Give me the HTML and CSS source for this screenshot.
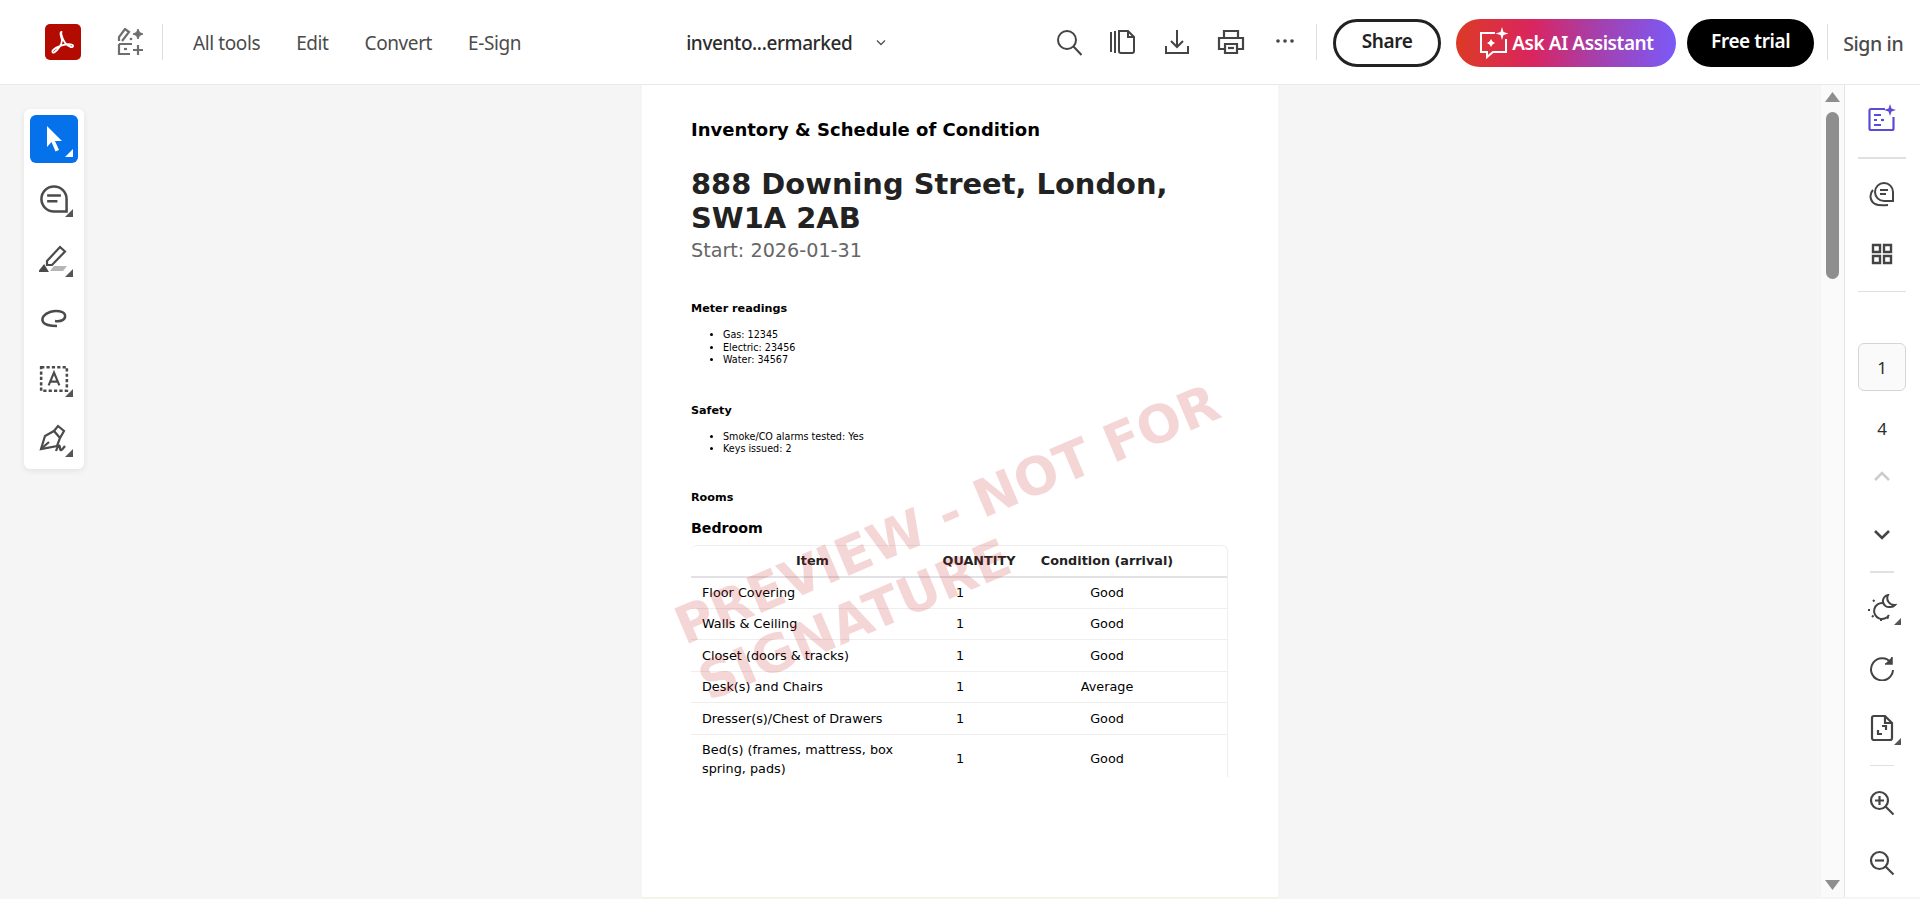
FILE: index.html
```html
<!DOCTYPE html>
<html lang="en">

<head>
    <meta charset="UTF-8">
    <title>inventory watermarked</title>
    <link rel="stylesheet" href="styles.css">
</head>

<body>
    <header class="topbar">
        <div class="logo">
            <svg width="36" height="36" viewBox="0 0 36 36"><path d="M16.600 8c-1.600 0-1.200 3 0 6.400 1.600 5-4 11.800-7.400 14-1.600 1-2.600-1-1-2.400 4-3.500 12.600-6.800 18.600-5.400 2 .5 1.600 2.900-1 2.400-4-.8-7.800-6-9.200-11.800-.7-3-.6-3.200 0-3.200z" fill="none" stroke="#fff" stroke-width="1.800" stroke-linejoin="round"/></svg>
        </div>
        <svg class="tools-icon" width="28" height="28" viewBox="0 0 28 28" fill="none" stroke="#6e6e6e" stroke-width="2.200"><path d="M2 13V9l6-8 4 3-7 9"/><path d="M2 16v10h11M2 16h13"/><path d="M16 22h10M21 17v10"/><path d="M21 1l1.500 3.500L26 6l-3.500 1.500L21 11l-1.500-3.500L16 6l3.500-1.500z" fill="#6e6e6e" stroke-width="1"/><circle cx="14" cy="11" r="1.300" fill="#6e6e6e" stroke="none"/><path d="M7 21h3"/></svg>
        <span class="vline vline-first"></span>
        <nav class="menu">
            <a>All tools</a>
            <a>Edit</a>
            <a>Convert</a>
            <a>E-Sign</a>
        </nav>
        <div class="filename">invento...ermarked</div>
        <svg class="file-chevron" width="12" height="8" viewBox="0 0 12 8" fill="none" stroke="#555" stroke-width="1.400"><path d="M2 1.500l4 4 4-4"/></svg>
        <div class="actions">
            <svg width="28" height="28" viewBox="0 0 28 28" fill="none" stroke="#444" stroke-width="2"><circle cx="12" cy="12" r="9"/><path d="M18.500 18.500l8 8.500"/></svg>
            <svg width="28" height="28" viewBox="0 0 28 28" fill="none" stroke="#444" stroke-width="2"><path d="M2 4v20M6 3v22"/><path d="M10 3h9l6 6v14a2 2 0 0 1-2 2H12a2 2 0 0 1-2-2z"/><path d="M19 3v6h6"/></svg>
            <svg width="28" height="28" viewBox="0 0 28 28" fill="none" stroke="#444" stroke-width="2"><path d="M14 2v17M8 13l6 6 6-6"/><path d="M3 18v7h22v-7"/></svg>
            <svg width="28" height="28" viewBox="0 0 28 28" fill="none" stroke="#444" stroke-width="2.200"><path d="M7 10V3h14v7"/><path d="M7 21H2V10h24v11h-5"/><path d="M8 16h12v9H8z"/><path d="M11 20h6"/></svg>
            <svg width="28" height="28" viewBox="0 0 28 28" fill="#444"><circle cx="7" cy="13" r="1.800"/><circle cx="14" cy="13" r="1.800"/><circle cx="21" cy="13" r="1.800"/></svg>
        </div>
        <span class="vline vline-actions"></span>
        <button class="btn btn-share">Share</button>
        <button class="btn btn-ai">
            <svg width="32" height="34" viewBox="0 0 32 34" fill="none" stroke="#fff" stroke-width="2"><path d="M17 7H3v19h6v5l6-5h13V13"/><path d="M24 1l1.500 5 5 1.500-5 1.500-1.500 5-1.500-5-5-1.500 5-1.500z" fill="#fff" stroke="none"/><path d="M13 13l1.500 2.500 2.500 1.500-2.500 1.500-1.500 2.500-1.500-2.500-2.500-1.500 2.500-1.500z" fill="#fff" stroke="none"/></svg>
            Ask AI Assistant
        </button>
        <button class="btn btn-trial">Free trial</button>
        <span class="vline vline-sign"></span>
        <a class="signin">Sign in</a>
    </header>

    <main class="viewer">
        <div class="side-left">
            <div class="toolbar">
                <div class="tool tool-active">
                    <svg width="24" height="28" viewBox="0 0 24 28" fill="#fff"><path d="M5 1l15 15h-7l4 9-3.500 1.500-4-9.500L5 22z"/></svg>
                    <span class="corner corner-white"></span>
                </div>
                <div class="tool">
                    <svg width="32" height="32" viewBox="0 0 28 28" fill="none" stroke="#4b4b4b" stroke-width="2.200"><path d="M14 3a11 11 0 1 0 0 22h11V14A11 11 0 0 0 14 3z"/><path d="M8 11h12M8 16h9"/></svg>
                    <span class="corner"></span>
                </div>
                <div class="tool">
                    <svg width="30" height="30" viewBox="0 0 30 30" fill="none" stroke="#4b4b4b" stroke-width="2.200"><path d="M8 17L21 3l5 4.500L13 21H8z"/><path d="M1 27l4-5 3 5z" fill="#4b4b4b"/><path d="M11 27l4-5h13l-4 5z" fill="#b5b5b5" stroke="none"/></svg>
                    <span class="corner"></span>
                </div>
                <div class="tool">
                    <svg width="28" height="24" viewBox="0 0 28 24" fill="none" stroke="#4b4b4b" stroke-width="2.400"><path d="M15 14c7 1 11-2 10-6-1-4-9-5-15-3C4 7 1 11 3 15c2 3 7 4 14 4"/></svg>
                </div>
                <div class="tool">
                    <svg width="30" height="30" viewBox="0 0 28 28" fill="none" stroke="#4b4b4b" stroke-width="2.400"><path d="M2 3h24v22H2z" stroke-dasharray="3 2"/><path d="M9 20l5-12 5 12M10.500 16.500h7" stroke-width="2"/></svg>
                    <span class="corner"></span>
                </div>
                <div class="tool">
                    <svg width="30" height="30" viewBox="0 0 30 30" fill="none" stroke="#4b4b4b" stroke-width="2.200"><path d="M2 25l4-13 9-5 6 7-3 8z"/><path d="M15 7l4-5 6 5-4 7"/><path d="M2 25l8-7"/><path d="M17 27c2-6 4-7 4-3s2 2 5-2"/></svg>
                    <span class="corner"></span>
                </div>
            </div>
        </div>

        <div class="page-col">
            <article class="page">
                <div class="doc-kicker">Inventory &amp; Schedule of Condition</div>
                <h1 class="doc-title">888 Downing Street, London, SW1A 2AB</h1>
                <div class="doc-start">Start: 2026-01-31</div>

                <h2 class="doc-section doc-meter">Meter readings</h2>
                <ul class="doc-list">
                    <li>Gas: 12345</li>
                    <li>Electric: 23456</li>
                    <li>Water: 34567</li>
                </ul>

                <h2 class="doc-section doc-safety">Safety</h2>
                <ul class="doc-list">
                    <li>Smoke/CO alarms tested: Yes</li>
                    <li>Keys issued: 2</li>
                </ul>

                <h2 class="doc-section doc-rooms">Rooms</h2>
                <h3 class="doc-room">Bedroom</h3>

                <div class="table-clip">
                    <table class="rooms">
                        <thead>
                            <tr><th class="col-item">Item</th><th class="col-qty">QUANTITY</th><th class="col-cond">Condition (arrival)</th><th></th></tr>
                        </thead>
                        <tbody>
                            <tr><td>Floor Covering</td><td>1</td><td>Good</td><td></td></tr>
                            <tr><td>Walls &amp; Ceiling</td><td>1</td><td>Good</td><td></td></tr>
                            <tr><td>Closet (doors &amp; tracks)</td><td>1</td><td>Good</td><td></td></tr>
                            <tr><td>Desk(s) and Chairs</td><td>1</td><td>Average</td><td></td></tr>
                            <tr><td>Dresser(s)/Chest of Drawers</td><td>1</td><td>Good</td><td></td></tr>
                            <tr><td>Bed(s) (frames, mattress, box spring, pads)</td><td>1</td><td>Good</td><td></td></tr>
                        </tbody>
                    </table>
                </div>

                <div class="watermark">PREVIEW - NOT FOR<br>SIGNATURE</div>
            </article>
        </div>

        <div class="side-right"></div>

        <div class="scroll-lane">
            <span class="arrow-up"></span>
            <span class="thumb"></span>
            <span class="arrow-down"></span>
        </div>

        <aside class="rail">
            <div class="rail-btn rail-ai">
                <svg width="28" height="28" viewBox="0 0 28 28" fill="none" stroke="#5c4bd6" stroke-width="2.200"><path d="M17 5H3a1.500 1.500 0 0 0-1.500 1.500v18A1.500 1.500 0 0 0 3 26h21a1.500 1.500 0 0 0 1.500-1.500V13"/><path d="M6 11h7M6 16h3M6 21h7"/><path d="M13 16h3"/><path d="M22 0l1.500 4.500L28 6l-4.500 1.500L22 12l-1.500-4.500L16 6l4.500-1.500z" fill="#5c4bd6" stroke="none"/></svg>
            </div>
            <div class="rail-sep rail-sep-thick"></div>
            <div class="rail-btn">
                <svg width="26" height="26" viewBox="0 0 26 26" fill="none" stroke="#444" stroke-width="2"><path d="M15 2a9 9 0 1 0 0 18h9v-9a9 9 0 0 0-9-9z"/><path d="M11 9h8M11 13h6"/><path d="M4 9a9 9 0 0 0 2 14c3 1.500 8 1.500 13 1"/></svg>
            </div>
            <div class="rail-btn">
                <svg width="22" height="22" viewBox="0 0 22 22" fill="none" stroke="#444" stroke-width="2.400"><path d="M2 2h7v7H2zM13 2h7v7h-7zM2 13h7v7H2zM13 13h7v7h-7z"/></svg>
            </div>
            <div class="rail-sep rail-sep-pages"></div>
            <div class="page-box">1</div>
            <div class="page-total">4</div>
            <div class="rail-btn rail-chev">
                <svg width="18" height="12" viewBox="0 0 18 12" fill="none" stroke="#ccc" stroke-width="2.600"><path d="M2 10l7-7 7 7"/></svg>
            </div>
            <div class="rail-btn rail-chev-down">
                <svg width="18" height="12" viewBox="0 0 18 12" fill="none" stroke="#444" stroke-width="2.600"><path d="M2 2l7 7 7-7"/></svg>
            </div>
            <div class="rail-sep rail-sep-short rail-sep-thick"></div>
            <div class="rail-btn">
                <svg width="30" height="28" viewBox="0 0 30 28" fill="none" stroke="#444" stroke-width="2"><path d="M16 9a8 8 0 1 0 6 12"/><path d="M21 1a6 6 0 0 0 2 12 6 6 0 0 0 5-2 7 7 0 0 1-7-10z"/><path d="M1 16h2M6 6l1.500 1.500M14 25v2M5 23l1.500-1.500M20 23l1.500 1.500"/></svg>
                <span class="corner corner-rail"></span>
            </div>
            <div class="rail-btn">
                <svg width="26" height="26" viewBox="0 0 26 26" fill="none" stroke="#444" stroke-width="2"><path d="M22 8a11 11 0 1 0 2 7"/><path d="M23 2v7h-7" fill="#444" stroke-width="1.500"/></svg>
            </div>
            <div class="rail-btn">
                <svg width="24" height="28" viewBox="0 0 24 28" fill="none" stroke="#444" stroke-width="2.200"><path d="M4 2h11l7 7v15a2 2 0 0 1-2 2H4a2 2 0 0 1-2-2V4a2 2 0 0 1 2-2z"/><path d="M15 2v7h7"/><path d="M12 12h4v4M12 20H8v-4"/></svg>
                <span class="corner corner-rail"></span>
            </div>
            <div class="rail-sep rail-sep-short rail-sep-zoom"></div>
            <div class="rail-btn">
                <svg width="26" height="26" viewBox="0 0 26 26" fill="none" stroke="#444" stroke-width="2.200"><circle cx="10.500" cy="10.500" r="8.500"/><path d="M16.500 16.500l8 8"/><path d="M6 10.500h9M10.500 6v9"/></svg>
            </div>
            <div class="rail-btn">
                <svg width="26" height="26" viewBox="0 0 26 26" fill="none" stroke="#444" stroke-width="2.200"><circle cx="10.500" cy="10.500" r="8.500"/><path d="M16.500 16.500l8 8"/><path d="M6 10.500h9"/></svg>
            </div>
        </aside>
    </main>
</body>

</html>
```

FILE: styles.css
```css
* {
    box-sizing: border-box;
}

html,
body {
    margin: 0;
    height: 100%;
    overflow: hidden;
}

body {
    background-color: #f5f5f5;
    font-family: "Noto Sans", sans-serif;
    color: #2c2c2c;
}

/* top bar */
.topbar {
    display: flex;
    align-items: center;
    height: 85px;
    padding: 2px 0 0 45px;
    background-color: #fff;
    border-bottom: 1px solid #e9e9e9;
}

.logo {
    width: 36px;
    height: 36px;
    margin-top: -2px;
    border-radius: 5px;
    background-color: #b30b00;
    flex: none;
}

.tools-icon {
    margin: -2px 0 0 36px;
    flex: none;
}

.vline {
    width: 1px;
    height: 36px;
    margin-top: -2px;
    background-color: #ddd;
    flex: none;
}

.vline-first {
    margin-left: 17px;
}

.menu {
    display: flex;
    gap: 36px;
    margin-left: 30px;
    font-size: 19px;
    letter-spacing: -0.4px;
    color: #4b4b4b;
}

.filename {
    width: 166px;
    margin-left: 165px;
    font-size: 19px;
    font-weight: 500;
    letter-spacing: -0.4px;
    color: #2c2c2c;
    white-space: nowrap;
}

.file-chevron {
    margin-left: 23px;
    flex: none;
}

.actions {
    display: flex;
    gap: 26px;
    margin: -2px 0 0 168px;
}

.vline-actions {
    margin-left: 17px;
}

.btn {
    height: 48px;
    border-radius: 24px;
    font-family: "Noto Sans", sans-serif;
    font-size: 19px;
    font-weight: 600;
    letter-spacing: -0.4px;
    border: none;
    padding: 0;
    flex: none;
}

.btn-share {
    width: 108px;
    margin-left: 16px;
    background-color: #fff;
    border: 3px solid #222;
    color: #222;
    padding-bottom: 4px;
}

.btn-ai {
    width: 220px;
    margin-left: 15px;
    display: flex;
    align-items: center;
    gap: 2px;
    padding-left: 22px;
    color: #fff;
    background: linear-gradient(90deg, #dc3a25 0%, #d92560 35%, #a83ea8 62%, #7a5af8 100%);
}

.btn-trial {
    width: 127px;
    margin-left: 11px;
    background-color: #000;
    color: #fff;
    padding-bottom: 4px;
}

.vline-sign {
    margin-left: 13px;
}

.signin {
    margin-left: 15px;
    font-size: 19.500px;
    font-weight: 500;
    letter-spacing: -0.4px;
    color: #4b4b4b;
    white-space: nowrap;
}

/* viewer */
.viewer {
    display: flex;
    height: 812px;
}

.side-left {
    width: 642px;
    flex: none;
    padding: 24px;
}

.toolbar {
    width: 60px;
    height: 360px;
    padding: 6px;
    display: flex;
    flex-direction: column;
    background-color: #fff;
    border-radius: 6px;
    box-shadow: 0 2px 6px rgba(0, 0, 0, 0.08);
}

.tool {
    position: relative;
    width: 48px;
    height: 48px;
    flex: none;
    margin-bottom: 12px;
    display: flex;
    align-items: center;
    justify-content: center;
    border-radius: 6px;
}

.tool:last-child {
    margin-bottom: 0;
}

.tool-active {
    background-color: #0572ec;
}

.corner {
    position: absolute;
    right: 5px;
    bottom: 6px;
    width: 8px;
    height: 8px;
    background-color: #555;
    clip-path: polygon(100% 0, 100% 100%, 0 100%);
}

.corner-white {
    background-color: #fff;
}

.corner-rail {
    right: 18px;
    bottom: 13px;
    width: 7px;
    height: 7px;
}

.page-col {
    width: 636px;
    height: 814px;
    flex: none;
    border-bottom: 2px solid #f5f2e6;
}

.page {
    position: relative;
    height: 812px;
    background-color: #fff;
    padding: 34px 50px 0 49px;
    font-family: "DejaVu Sans", sans-serif;
    color: #000;
}

.doc-kicker {
    font-size: 18px;
    line-height: 21px;
    font-weight: 700;
}

.doc-title {
    margin: 27px 0 0;
    font-size: 28.900px;
    line-height: 34px;
    font-weight: 700;
    color: #222;
}

.doc-start {
    margin-top: 5px;
    font-size: 19.200px;
    line-height: 22px;
    color: #666;
}

.doc-section {
    margin: 0;
    font-size: 11.200px;
    line-height: 14px;
    font-weight: 700;
}

.doc-meter {
    margin-top: 40px;
}

.doc-safety {
    margin-top: 37px;
}

.doc-rooms {
    margin-top: 35px;
}

.doc-list {
    margin: 13px 0 0;
    padding-left: 32px;
    font-size: 9.600px;
    line-height: 12.500px;
}

.doc-room {
    margin: 14px 0 0;
    font-size: 14.200px;
    line-height: 18px;
    font-weight: 700;
}

.table-clip {
    margin-top: 8px;
    width: 537px;
    height: 232px;
    overflow: hidden;
    border-top: 1px solid #eee;
    border-right: 1px solid #eee;
    border-radius: 6px 6px 0 0;
}

.rooms {
    width: 537px;
    table-layout: fixed;
    border-collapse: collapse;
    font-size: 12.800px;
    line-height: 19px;
}

.rooms th {
    height: 31px;
    padding: 0;
    font-weight: 700;
    color: #222;
    text-align: center;
    border-bottom: 2px solid #e2e2e6;
}

.col-item {
    width: 243px;
}

.col-qty {
    width: 90px;
}

.col-cond {
    width: 166px;
}

.rooms td {
    padding: 5px 10px 5px 11px;
    height: 31.500px;
    text-align: center;
    border-bottom: 1px solid #eee;
}

.rooms td:first-child {
    text-align: left;
    padding-right: 30px;
}

.rooms td:nth-child(2) {
    padding: 5px 48px 5px 10px;
}

.rooms td:nth-child(3) {
    padding: 5px 10px;
}

.watermark {
    position: absolute;
    left: 24px;
    top: 516px;
    transform: rotate(-23deg);
    transform-origin: left top;
    font-family: "DejaVu Sans", sans-serif;
    font-size: 52px;
    line-height: 61px;
    font-weight: 700;
    color: rgba(200, 30, 30, 0.18);
    pointer-events: none;
    white-space: nowrap;
}

.side-right {
    flex: 1;
}

.scroll-lane {
    position: relative;
    width: 24px;
    flex: none;
    background-color: #fafafa;
    border-right: 1px solid #e4e4e4;
}

.arrow-up,
.arrow-down {
    position: absolute;
    left: 4px;
    width: 15px;
    height: 10px;
    background-color: #8e8e8e;
}

.arrow-up {
    top: 7px;
    clip-path: polygon(50% 0, 100% 100%, 0 100%);
}

.arrow-down {
    bottom: 7px;
    clip-path: polygon(0 0, 100% 0, 50% 100%);
}

.thumb {
    position: absolute;
    top: 27px;
    left: 5px;
    width: 13px;
    height: 167px;
    border-radius: 7px;
    background-color: #8e8e8e;
}

.rail {
    width: 75px;
    flex: none;
    padding: 3px 1px 0 0;
    background-color: #fff;
    display: flex;
    flex-direction: column;
    align-items: center;
}

.rail-btn {
    position: relative;
    width: 100%;
    height: 60px;
    flex: none;
    display: flex;
    align-items: center;
    justify-content: center;
}

.rail-sep {
    width: 48px;
    height: 1px;
    flex: none;
    background-color: #e0e0e0;
}

.rail-sep-thick {
    height: 2px;
    margin: 9px 0 5px;
}

.rail-sep-pages {
    margin: 7px 0 0;
}

.rail-sep-short {
    width: 24px;
    margin: 6px 0 5px;
}

.rail-sep-zoom {
    margin: 7px 0 7px;
}

.page-box {
    width: 48px;
    height: 48px;
    margin-top: 51px;
    flex: none;
    display: flex;
    align-items: center;
    justify-content: center;
    background-color: #fafafa;
    border: 1px solid #d5d5d5;
    border-radius: 6px;
    font-size: 17px;
}

.page-total {
    height: 48px;
    margin-top: 13px;
    flex: none;
    display: flex;
    align-items: center;
    font-size: 17px;
}

.rail-chev {
    height: 48px;
}

.rail-chev-down {
    margin-top: 5px;
}
```
